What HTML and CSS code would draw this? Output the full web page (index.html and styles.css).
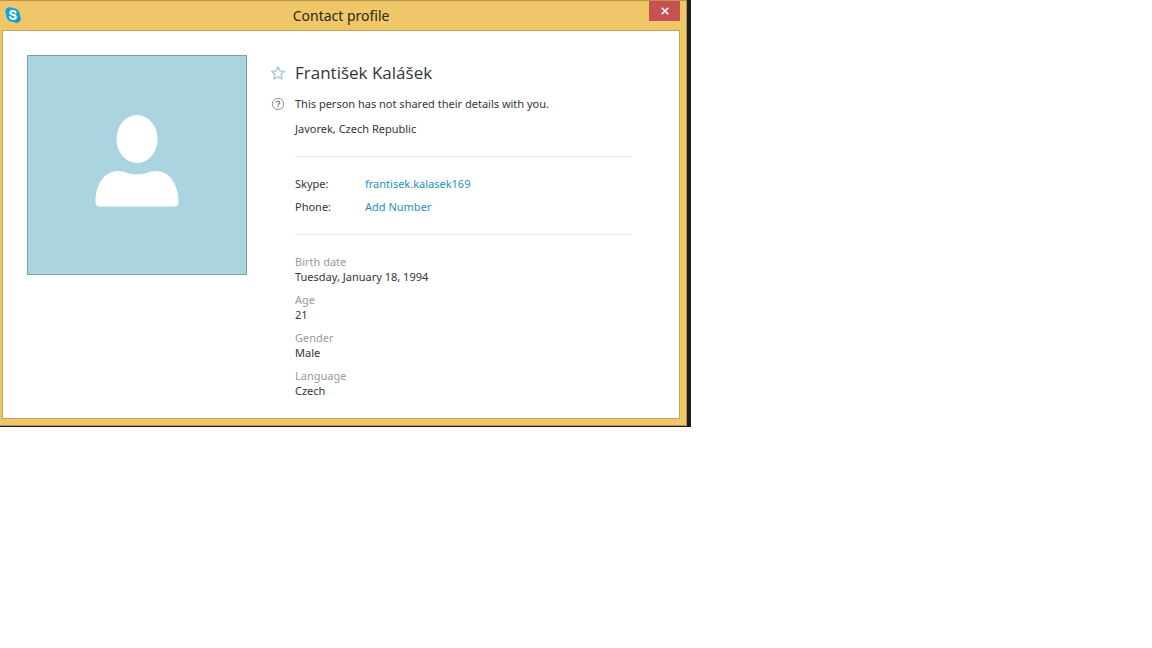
FILE: index.html
```html
<!DOCTYPE html>
<html lang="en">

<head>
    <meta charset="UTF-8">
    <meta name="viewport" content="width=device-width, initial-scale=1.0">
    <title>Contact profile</title>
    <link rel="stylesheet" href="styles.css">
</head>

<body>
    <div class="backdrop">
        <div class="window">
            <header class="title-bar">
                <svg class="app-icon" viewBox="0 0 16 16" width="16" height="16" aria-hidden="true">
                    <circle cx="4.6" cy="4.6" r="4.3" fill="#12a5dc" />
                    <circle cx="11.4" cy="11.4" r="4.3" fill="#0a92cf" />
                    <circle cx="8" cy="8" r="7" fill="#12a5dc" />
                    <path d="M10.7 5.7C10.2 4.6 9.2 4.1 8 4.1c-1.5 0-2.6.6-2.6 1.8C5.4 8.3 10.8 7.3 10.8 9.9c0 1.3-1.2 2-2.8 2-1.4 0-2.5-.6-2.9-1.8" fill="none" stroke="#fff" stroke-width="2" stroke-linecap="round" />
                </svg>
                <h1 class="window-title">Contact profile</h1>
                <button class="close-btn" type="button" aria-label="Close">
                    <svg viewBox="0 0 8 8" width="8" height="8" aria-hidden="true">
                        <path d="M.7.7l6.6 6.6M7.3.7L.7 7.3" stroke="#fff" stroke-width="1.6" />
                    </svg>
                </button>
            </header>

            <main class="profile">
                <svg class="avatar" viewBox="0 0 220 220" role="img" aria-label="Profile picture">
                    <ellipse cx="110" cy="84" rx="20.5" ry="24" fill="#fff" />
                    <path d="M68.5 147C68.5 130 77 116 91 116C98 116 101 119.5 110 119.5C119 119.5 122 116 129 116C143 116 151.5 130 151.5 147C151.5 150 150 151.5 147 151.5H73C70 151.5 68.5 150 68.5 147Z" fill="#fff" />
                </svg>

                <div class="info">
                    <div class="name-row">
                        <button class="star-btn" type="button" aria-label="Add to favorites">
                            <svg viewBox="0 0 14 14" width="14" height="14" aria-hidden="true">
                                <path d="M7 .7l1.9 4.1 4.5.5-3.3 3.1.9 4.7-4-2.3-4 2.3.9-4.7L.6 5.3l4.5-.5z" fill="none" stroke="#9fc3d2" stroke-width="1.2" stroke-linejoin="round" />
                            </svg>
                        </button>
                        <h2 class="name">František Kalášek</h2>
                    </div>
                    <div class="status-row">
                        <svg viewBox="0 0 14 14" width="14" height="14" aria-hidden="true">
                            <circle cx="7" cy="7" r="5.7" fill="none" stroke="#93979b" />
                            <path d="M5.3 5.7C5.3 3.6 8.7 3.6 8.7 5.6C8.7 6.8 7 6.8 7 8.2M7 9.2v1.2" fill="none" stroke="#85898d" stroke-width="1.4" />
                        </svg>
                        <p>This person has not shared their details with you.</p>
                    </div>
                    <p class="location">Javorek, Czech Republic</p>

                    <dl class="contacts">
                        <dt>Skype:</dt>
                        <dd><a href="#">frantisek.kalasek169</a></dd>
                        <dt>Phone:</dt>
                        <dd><a href="#">Add Number</a></dd>
                    </dl>

                    <dl class="details">
                        <div>
                            <dt>Birth date</dt>
                            <dd>Tuesday, January 18, 1994</dd>
                        </div>
                        <div>
                            <dt>Age</dt>
                            <dd>21</dd>
                        </div>
                        <div>
                            <dt>Gender</dt>
                            <dd>Male</dd>
                        </div>
                        <div>
                            <dt>Language</dt>
                            <dd>Czech</dd>
                        </div>
                    </dl>
                </div>
            </main>
        </div>
    </div>
</body>

</html>
```
FILE: styles.css
```css
* {
    margin: 0;
    padding: 0;
    box-sizing: border-box;
}

body {
    background: #fff;
    color: #33363b;
    font-family: 'Noto Sans', 'Open Sans', sans-serif;
    font-size: 11px;
    line-height: 16px;
}

.backdrop {
    width: 60%;
    padding: 0 4px 1px 0;
    background: #1d1c1a;
}

.window {
    padding: 0 6px 6px 2px;
    background: #efc769;
    border: 1px solid #b8974b;
    border-left: none;
}

/* Title bar */
.title-bar {
    display: grid;
    grid-template-columns: 1fr auto 1fr;
    height: 29px;
}

.app-icon {
    margin: 6px 0 0 3px;
}

.window-title {
    align-self: center;
    font-size: 14px;
    font-weight: normal;
    line-height: 20px;
    color: #2b271c;
}

.close-btn {
    display: flex;
    justify-content: center;
    align-items: center;
    justify-self: end;
    width: 31px;
    height: 20px;
    border: none;
    background: #c75050;
    cursor: pointer;
}

/* Profile */
.profile {
    display: flex;
    align-items: flex-start;
    gap: 24px;
    padding: 24px 48px 20px 24px;
    background: #fff;
    border: 1px solid #c1a45c;
}

.avatar {
    flex: none;
    width: 220px;
    height: 220px;
    background: #abd4e1;
    outline: 1px solid #7f9ea8;
    outline-offset: -1px;
}

.info {
    flex: 1;
    padding: 6px 0 0 24px;
}

.name-row,
.status-row {
    display: flex;
    align-items: center;
    gap: 10px;
    margin-left: -24px;
}

.star-btn {
    display: flex;
    border: none;
    background: none;
    cursor: pointer;
}

.name {
    font-family: 'Open Sans', 'Noto Sans', sans-serif;
    font-size: 17px;
    font-weight: normal;
    line-height: 24px;
}

.status-row {
    margin-top: 11px;
}

.location {
    margin-top: 9px;
}

.contacts {
    display: grid;
    grid-template-columns: 70px 1fr;
    row-gap: 7px;
    margin-top: 19px;
    padding: 19px 0;
    border-top: 1px solid #e6e8ea;
    border-bottom: 1px solid #e6e8ea;
}

.contacts a {
    color: #1c91c5;
    text-decoration: none;
}

.details {
    display: grid;
    gap: 8px;
    margin-top: 19px;
    line-height: 15px;
}

.details dt {
    color: #979a9e;
}
```
